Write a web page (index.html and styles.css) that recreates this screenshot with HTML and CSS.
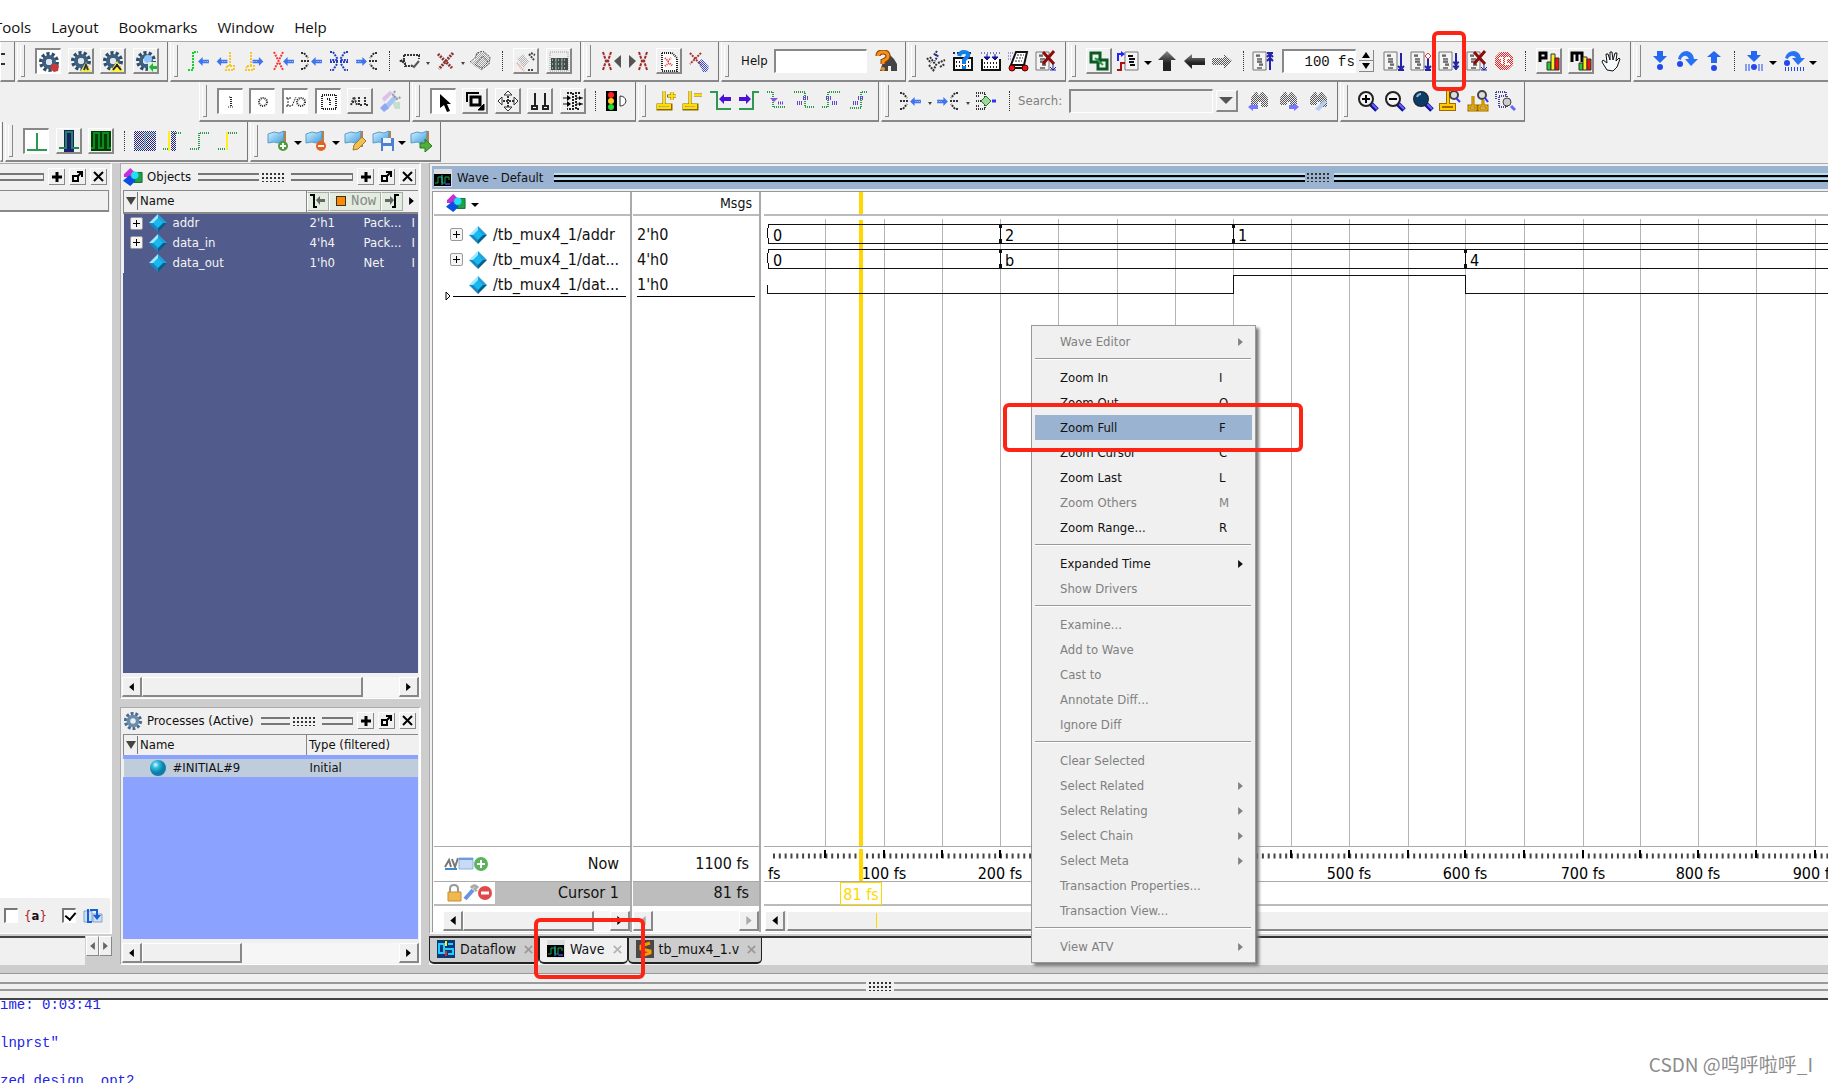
FILE: index.html
```html
<!DOCTYPE html>
<html lang="en">
<head>
<meta charset="utf-8">
<title>Wave - Default</title>
<link rel="stylesheet" href="styles.css">
</head>
<body>
<svg class="defs" aria-hidden="true">
  <defs>
    <pattern id="p-blue" width="2" height="2" patternUnits="userSpaceOnUse"><path fill="#3a46c8" d="M0 0h1v1H0zM1 1h1v1H1z"/></pattern>
    <pattern id="p-navy" width="2" height="2" patternUnits="userSpaceOnUse"><path fill="#23237c" d="M0 0h1v1H0zM1 1h1v1H1z"/></pattern>
    <pattern id="p-gray" width="2" height="2" patternUnits="userSpaceOnUse"><path fill="#555" d="M0 0h1v1H0zM1 1h1v1H1z"/></pattern>
    <pattern id="p-red" width="2" height="2" patternUnits="userSpaceOnUse"><path fill="#e22" d="M0 0h1v1H0zM1 1h1v1H1z"/></pattern>
    <linearGradient id="g-flag" x2="1" y2="1"><stop stop-color="#d8f2ff"/><stop offset="1" stop-color="#3c9fe0"/></linearGradient>
    <linearGradient id="g-ink" x2="0" y2="1"><stop stop-color="#888"/><stop offset=".6" stop-color="#222"/></linearGradient>
    <radialGradient id="g-ball" cx=".35" cy=".3"><stop stop-color="#e4fbff"/><stop offset=".4" stop-color="#35c0e4"/><stop offset="1" stop-color="#0c7fa4"/></radialGradient>
  </defs>
  <symbol id="gear" viewBox="0 0 22 22"><circle cx="11" cy="11" r="8" fill="none" stroke="#2f4c69" stroke-width="4" stroke-dasharray="3 2"/><circle cx="11" cy="11" r="5" fill="none" stroke="#3d5f80" stroke-width="4"/><circle cx="11" cy="11" r="3" fill="#dfe6ee"/></symbol>
  <symbol id="gear-light" viewBox="0 0 22 22"><circle cx="11" cy="11" r="8" fill="none" stroke="#4a6b8a" stroke-width="4" stroke-dasharray="3 2"/><circle cx="11" cy="11" r="5" fill="none" stroke="#6a8dad" stroke-width="4"/><circle cx="11" cy="11" r="2" fill="#e8eef4"/></symbol>
  <symbol id="gear-stop" viewBox="0 0 22 22"><use href="#gear"/><path d="M14 13h5l2 2-1 5-4 1-4-3z" fill="#c33a3a"/></symbol>
  <symbol id="gear-warn" viewBox="0 0 22 22"><use href="#gear"/><path d="M16 12l6 10H10z" fill="#f3e95a"/><path d="M14 20l2-5 2 5" fill="none" stroke="#333" stroke-width="2"/></symbol>
  <symbol id="gear-warn2" viewBox="0 0 22 22"><use href="#gear"/><path d="M15 11l7 11H8z" fill="#fff04a"/><path d="M11 20l4-5 4 5M15 14v3" fill="none" stroke="#222" stroke-width="2"/></symbol>
  <symbol id="gear-net" viewBox="0 0 22 22"><use href="#gear"/><circle cx="13" cy="9" r="4" fill="#8fc4ff"/><path d="M13 12h9v10h-9z" fill="#d8f4d8"/><path d="M14 17l4-4v3h4v3h-4v3z" fill="#29b03a"/></symbol>
  <symbol id="al" viewBox="0 0 12 10"><path d="M0 5l5-5v3h7v4H5v3z" fill="#3f74ee"/><path d="M6 5h6" stroke="#bcd4ff" stroke-dasharray="1 1"/></symbol>
  <symbol id="ar" viewBox="0 0 12 10"><path d="M12 5L7 0v3H0v4h7v3z" fill="#3f74ee"/><path d="M0 5h6" stroke="#bcd4ff" stroke-dasharray="1 1"/></symbol>
  <symbol id="edge-in" viewBox="0 0 22 22"><path d="M1 20h5V2h5" fill="none" stroke="#18d030" stroke-width="2" stroke-dasharray="2 1"/><use href="#al" x="11" y="7" width="11" height="9"/></symbol>
  <symbol id="flag-l" viewBox="0 0 22 22"><path d="M15 2v14M12 16h7v4h-8z" fill="none" stroke="#f4c82c" stroke-width="2" stroke-dasharray="2 1"/><use href="#al" x="1" y="7" width="12" height="9"/></symbol>
  <symbol id="flag-r" viewBox="0 0 22 22"><path d="M7 2v14M3 16h7v4H2z" fill="none" stroke="#f4c82c" stroke-width="2" stroke-dasharray="2 1"/><use href="#ar" x="8" y="7" width="12" height="9"/></symbol>
  <symbol id="x-in" viewBox="0 0 22 22"><path d="M2 2l9 18M11 2L2 20" fill="none" stroke="#f33" stroke-width="2" stroke-dasharray="2 1"/><use href="#al" x="11" y="7" width="11" height="9"/></symbol>
  <symbol id="c-in" viewBox="0 0 22 22"><path d="M1 3h3l4 5M1 11h8M1 19h3l4-5" fill="none" stroke="#333" stroke-width="2" stroke-dasharray="2 1"/><use href="#al" x="11" y="7" width="11" height="9"/></symbol>
  <symbol id="c-both" viewBox="0 0 22 22"><path d="M2 2h3l4 6v2H2M2 12h7v2l-4 6H2M20 2h-3l-4 6v2h7M20 12h-7v2l4 6h3" fill="none" stroke="#2440c0" stroke-width="2" stroke-dasharray="2 1"/></symbol>
  <symbol id="c-out" viewBox="0 0 22 22"><path d="M21 3h-3l-4 5M21 11h-8M21 19h-3l-4-5" fill="none" stroke="#333" stroke-width="2" stroke-dasharray="2 1"/><use href="#ar" x="0" y="7" width="11" height="9"/></symbol>
  <symbol id="sel" viewBox="0 0 22 22"><path d="M5 5h16M5 5v4l-3 2 4 2v3h8M1 11h5M20 5v4" fill="none" stroke="#333" stroke-width="2" stroke-dasharray="2 1"/><path d="M12 15l3 2 5-6" fill="none" stroke="#555" stroke-width="2"/></symbol>
  <symbol id="x-dark" viewBox="0 0 22 22"><path d="M4 4l14 14M19 3L5 19" stroke="#8c3434" stroke-width="3" stroke-dasharray="2 1"/></symbol>
  <symbol id="diam" viewBox="0 0 22 22"><path d="M7 3l8-1 7 8-4 6-7 4-4-3-6-4 5-3z" fill="url(#p-gray)" opacity=".5"/><path d="M1 12l5-4 2-5 6-2 7 6-1 7-8 6M6 15l8-9 5 6-6 6z" fill="none" stroke="#555" stroke-dasharray="2 1"/></symbol>
  <symbol id="doc-dim" viewBox="0 0 22 22"><path d="M2 9l6-5 6 7-5 7z" fill="url(#p-gray)" opacity=".4"/><path d="M2 13l7 8" stroke="#e99" stroke-width="2" stroke-dasharray="1 1"/><path d="M14 4l5 6M13 20h6M16 3l4 2" stroke="#444" stroke-width="2" stroke-dasharray="2 1"/></symbol>
  <symbol id="table" viewBox="0 0 22 22"><path d="M2 2h18v19H2z" fill="#eee" stroke="#999" stroke-dasharray="1 1"/><path d="M3 8h17v12H3z" fill="#4a4a4a"/><path d="M4 10h15M4 14h15M4 18h15" stroke="#59c0a0" stroke-width="2" stroke-dasharray="1 2"/><path d="M8 8v12M14 8v12" stroke="#999"/></symbol>
  <symbol id="xl" viewBox="0 0 22 22"><path d="M3 2l3 9-3 9M11 2l-3 9 3 9M6 11h3" fill="none" stroke="#a02c2c" stroke-width="2" stroke-dasharray="3 1"/><path d="M21 5v13l-7-7z" fill="#555"/></symbol>
  <symbol id="xr" viewBox="0 0 22 22"><path d="M11 2l3 9-3 9M19 2l-3 9 3 9M13 11h3" fill="none" stroke="#a02c2c" stroke-width="2" stroke-dasharray="3 1"/><path d="M1 5v13l7-7z" fill="#555"/></symbol>
  <symbol id="page-x" viewBox="0 0 22 22"><path d="M4 3h10l5 5v13H4z" fill="#fff" stroke="#222" stroke-width="2" stroke-dasharray="1 1"/><path d="M7 8l3 3 3-3M7 16l4-3 4 3" fill="none" stroke="#e33" stroke-width="2" stroke-dasharray="1 1"/></symbol>
  <symbol id="x-brush" viewBox="0 0 22 22"><path d="M2 3l11 12M13 3L2 14" stroke="#a33" stroke-width="2" stroke-dasharray="2 1"/><path d="M10 12l4-3 7 8-2 5h-4z" fill="url(#p-blue)"/></symbol>
  <symbol id="find-help" viewBox="0 0 22 22"><path d="M8 12l5-7h2l4 4 3 5v7h-6v-5h-3v5H5z" fill="#444"/><path d="M3 6q0-4 5-4t5 4q0 3-5 5v3" fill="none" stroke="#8a4400" stroke-width="5"/><path d="M3 6q0-4 5-4t5 4q0 3-5 5v3" fill="none" stroke="#f78e1e" stroke-width="3"/><circle cx="8" cy="19" r="2" fill="#f78e1e"/></symbol>
  <symbol id="compile" viewBox="0 0 22 22"><path d="M2 8l4 5M5 7l5 7M4 15l5 6M13 13l7-3M15 17l5-3M8 21l4-8" stroke="#333" stroke-width="2" stroke-dasharray="2 1"/><path d="M12 1L9 5h4l-3 6" fill="none" stroke="#337" stroke-width="2" stroke-dasharray="2 1"/></symbol>
  <symbol id="tray-q" viewBox="0 0 22 22"><path d="M2 8h18v12H2z" fill="#fff" stroke="#111" stroke-width="2"/><path d="M4 12h15M4 16h15" stroke="#222" stroke-width="2" stroke-dasharray="1 2"/><path d="M1 3h20" stroke="#23237c" stroke-width="2" stroke-dasharray="2 2"/><path d="M7 6q1-4 5-4 5 0 4 4l-4 4v4" fill="none" stroke="#1280e8" stroke-width="4"/><path d="M10 16h4v3h-4z" fill="#1280e8"/></symbol>
  <symbol id="tray" viewBox="0 0 22 22"><path d="M2 9v11h18V9" fill="#fff" stroke="#111" stroke-width="2"/><path d="M4 13h15M4 17h15" stroke="#222" stroke-width="2" stroke-dasharray="1 2"/><path d="M1 3h20" stroke="#77c" stroke-width="2" stroke-dasharray="1 2"/><path d="M7 4v4M15 4v4M4 7l3 3 3-3zM12 7l3 3 3-3z" stroke="#119" fill="#119"/></symbol>
  <symbol id="cart" viewBox="0 0 22 22"><path d="M9 2h11l-3 13H4z" fill="#fff" stroke="#111" stroke-width="2"/><path d="M10 5h7M9 8h7M8 11h7" stroke="#333" stroke-dasharray="2 1"/><path d="M1 3h5M1 6h4M1 9h3" stroke="#55b" stroke-dasharray="1 1"/><path d="M3 18h15" stroke="#111" stroke-width="2"/><circle cx="5" cy="18" r="3" fill="#e11" stroke="#400"/><circle cx="18" cy="18" r="3" fill="#e11" stroke="#400"/></symbol>
  <symbol id="page" viewBox="0 0 22 22"><path d="M1 2h13v18H1z" fill="#f4f4f4" stroke="#777"/><path d="M4 6h4M5 9h5M5 12h5M7 15h4M5 18h5" stroke="#111"/><path d="M4 5h4M5 11h5M7 14h4" stroke="#555"/></symbol>
  <symbol id="page-kill" viewBox="0 0 22 22"><use href="#page"/><path d="M8 2l11 12M19 1L8 14" stroke="#8c0b0b" stroke-width="3"/><path d="M18 14v6M15 20h6M15 17l3 3 3-3" stroke="#229" fill="none"/></symbol>
  <symbol id="chain" viewBox="0 0 22 22"><path d="M3 3h9v9H3zM10 10h9v9h-9z" fill="none" stroke="#0b5a22" stroke-width="3"/><path d="M7 8l8 7" stroke="#2f9a4c" stroke-width="2"/></symbol>
  <symbol id="restart" viewBox="0 0 22 22"><path d="M8 2h13v18H8z" fill="#f4f4f4" stroke="#777"/><path d="M11 6h5M12 9h6M12 12h5M13 15h5" stroke="#111" stroke-width="2"/><path d="M1 11V4h4" fill="none" stroke="#22f" stroke-width="2"/><path d="M4 1l4 3-4 3z" fill="#22f"/><path d="M0 20h4v-7h4" fill="none" stroke="#a11" stroke-width="2"/></symbol>
  <symbol id="a-up" viewBox="0 0 22 22"><path d="M11 1l9 9h-5v11H7V10H2z" fill="url(#g-ink)"/></symbol>
  <symbol id="a-left" viewBox="0 0 22 22"><path d="M1 11l8-7v4h13v7H9v4z" fill="url(#g-ink)"/></symbol>
  <symbol id="a-right" viewBox="0 0 22 22"><path d="M21 11l-8-7v4H1v7h12v4z" fill="url(#p-gray)"/></symbol>
  <symbol id="run-len" viewBox="0 0 22 22"><use href="#page"/><path d="M18 3v17M15 3h6M15 7l3-3 3 3M15 11l3-3 3 3" stroke="#22a" stroke-width="2" fill="none"/></symbol>
  <symbol id="run" viewBox="0 0 22 22"><use href="#page"/><path d="M18 3v16M15 20h6M15 16l3 3 3-3" stroke="#22a" stroke-width="2" fill="none"/></symbol>
  <symbol id="run-cont" viewBox="0 0 22 22"><use href="#page"/><path d="M18 9v10M15 20h6M15 16l3 3 3-3" stroke="#22a" stroke-width="2" fill="none"/><path d="M18 3l3 3-3 3-3-3z" fill="#fff" stroke="#e33"/></symbol>
  <symbol id="run-all" viewBox="0 0 22 22"><use href="#page"/><path d="M18 3v15" stroke="#22a" stroke-width="2"/><path d="M15 12h6l-3 4zM15 16h6l-3 4z" stroke="#22a" fill="#22a"/></symbol>
  <symbol id="stop" viewBox="0 0 22 22"><path d="M7 2h8l5 5v8l-5 5H7l-5-5V7z" fill="url(#p-red)"/><path d="M6 8h3v6M17 8h-4v6h4" stroke="#fff" stroke-width="2" fill="none"/></symbol>
  <symbol id="prof-p" viewBox="0 0 22 22"><path d="M2 12V3h6v5H2" fill="none" stroke="#000" stroke-width="3"/><path d="M9 12h4v8H9z" fill="#2c2" stroke="#333"/><path d="M13 4h4v16h-4z" fill="#fe2" stroke="#333"/><path d="M17 8h4v12h-4z" fill="#e11" stroke="#333"/></symbol>
  <symbol id="prof-m" viewBox="0 0 22 22"><path d="M2 12V3h10v9M7 3v8" fill="none" stroke="#000" stroke-width="3"/><path d="M9 13h4v7H9z" fill="#2c2" stroke="#333"/><path d="M13 7h4v13h-4z" fill="#fe2" stroke="#333"/><path d="M17 9h4v11h-4z" fill="#e11" stroke="#333"/></symbol>
  <symbol id="hand" viewBox="0 0 22 22"><path d="M7 20l-5-8 1-2 4 3-1-9h2l2 6V2h2l1 8 2-7h2l-1 8 3-3 1 1-3 8-4 4z" fill="#f6faff" stroke="#111"/></symbol>
  <symbol id="st-in" viewBox="0 0 22 22"><path d="M8 1h6v5h4l-7 7-7-7h4z" fill="#2468f0"/><circle cx="11" cy="17" r="3" fill="#2448f0"/></symbol>
  <symbol id="st-over" viewBox="0 0 22 22"><path d="M2 9q2-8 9-8 6 1 7 8h4l-7 7-6-7h4q-2-4-5-3-3 1-3 4z" fill="#2a72f4"/><circle cx="4" cy="14" r="3" fill="#2448f0"/></symbol>
  <symbol id="st-out" viewBox="0 0 22 22"><path d="M8 13V7H4l7-6 7 6h-4v6z" fill="#2468f0"/><circle cx="11" cy="18" r="3" fill="#2448f0"/></symbol>
  <symbol id="st-in2" viewBox="0 0 22 22"><path d="M8 1h6v4h4l-7 7-7-7h4z" fill="#2468f0"/><circle cx="11" cy="17" r="3" fill="#2448f0"/><path d="M3 14v7M6 14v7M16 14v7M19 14v7" stroke="#2448f0"/></symbol>
  <symbol id="st-over2" viewBox="0 0 22 22"><path d="M2 8q2-7 9-7 6 1 7 7h4l-7 7-6-7h4q-2-3-5-2-3 1-3 3z" fill="#2a72f4"/><circle cx="4" cy="13" r="3" fill="#2448f0"/><path d="M2 19h19" stroke="#2448f0" stroke-width="4" stroke-dasharray="1 2"/></symbol>
  <symbol id="l-i" viewBox="0 0 22 22"><path d="M9 6h2M8 16h6" stroke="#222" stroke-dasharray="1 1"/><path d="M11 6v10" stroke="#222" stroke-width="2" stroke-dasharray="1 1"/></symbol>
  <symbol id="l-o" viewBox="0 0 22 22"><circle cx="11" cy="11" r="4" fill="none" stroke="#222" stroke-width="2" stroke-dasharray="1 1"/></symbol>
  <symbol id="l-io" viewBox="0 0 22 22"><path d="M1 7h5M3 7v8M1 15h5M7 15l4-9" stroke="#222" stroke-dasharray="2 1" fill="none"/><circle cx="16" cy="11" r="4" fill="none" stroke="#222" stroke-width="2" stroke-dasharray="1 1"/></symbol>
  <symbol id="l-box" viewBox="0 0 22 22"><path d="M4 4h14v14H4zM9 8h3v7" fill="none" stroke="#222" stroke-width="2" stroke-dasharray="1 1"/></symbol>
  <symbol id="l-all" viewBox="0 0 22 22"><path d="M2 15l3-8 3 8M3 12h4M10 7v8h4M16 7v8h4" fill="none" stroke="#333" stroke-width="2" stroke-dasharray="2 1"/></symbol>
  <symbol id="paint" viewBox="0 0 22 22"><path d="M3 8l8-7 3 2-9 9z" fill="#dcc0e8"/><path d="M13 12h8v7h-5z" fill="#c4e0cc"/><path d="M5 16L15 5l4 3L8 20z" fill="#a9c4f4"/><path d="M16 1l-2 4 4 4 4-2" fill="none" stroke="#999" stroke-width="2" stroke-dasharray="2 1"/><path d="M1 18l5-5 4 5-5 4z" fill="#8fa8f4"/></symbol>
  <symbol id="cursor" viewBox="0 0 22 22"><path d="M7 3v14l4-3 3 7 3-1-3-7h4z" fill="#000"/></symbol>
  <symbol id="zoom-box" viewBox="0 0 22 22"><path d="M3 12V3h12" fill="none" stroke="#000" stroke-width="2"/><path d="M7 7h9v8H7z" fill="none" stroke="#000" stroke-width="3"/><path d="M15 14l4 4M20 14v6h-6z" fill="#000" stroke="#000"/></symbol>
  <symbol id="pan" viewBox="0 0 22 22"><path d="M11 3v16M3 11h16" stroke="#333" stroke-width="2" stroke-dasharray="2 1"/><path d="M7 5l4-4 4 4zM7 17l4 4 4-4zM5 7l-4 4 4 4zM17 7l4 4-4 4z" fill="#fff" stroke="#333"/></symbol>
  <symbol id="two" viewBox="0 0 22 22"><path d="M6 3v13M16 3v13" stroke="#222" stroke-width="2"/><path d="M3 16h5v3H3zM14 16h5v3h-5z" fill="#fff" stroke="#222" stroke-width="2"/></symbol>
  <symbol id="edit-m" viewBox="0 0 22 22"><path d="M5 3h6v16H5M18 3h-4v16h4" fill="none" stroke="#222" stroke-width="2" stroke-dasharray="2 1"/><path d="M1 8h5M1 14h5M14 8h7M14 14h7" stroke="#111" fill="none"/><path d="M5 5l4 3-4 3zM5 11l4 3-4 3zM17 6l3 2-3 2zM17 12l3 2-3 2z"/></symbol>
  <symbol id="traffic" viewBox="0 0 22 22"><path d="M1 1h11v20H1z" fill="#000"/><circle cx="6" cy="5" r="3" fill="#f22"/><circle cx="6" cy="11" r="3" fill="#fc2"/><circle cx="6" cy="17" r="3" fill="#2d3"/><path d="M15 6q5 0 6 5-1 5-6 5z" fill="#fff" stroke="#333"/></symbol>
  <symbol id="cur-add" viewBox="0 0 22 22"><path d="M9 1v14M3 15h13v4H3zM12 6h9M17 2v8" fill="none" stroke="#8a6a00" stroke-width="3"/><path d="M9 1v14M3 15h12v3H3zM13 6h8M17 2v8" fill="none" stroke="#fd0" stroke-width="2"/></symbol>
  <symbol id="cur-del" viewBox="0 0 22 22"><path d="M8 1v14M2 15h13v4H2zM12 5h8" fill="none" stroke="#8a6a00" stroke-width="3"/><path d="M8 1v14M2 15h12v3H2zM12 5h8" fill="none" stroke="#fd0" stroke-width="2"/></symbol>
  <symbol id="tr-prev" viewBox="0 0 22 22"><path d="M0 2h7v17h14" fill="none" stroke="#2e9a50" stroke-width="2"/><path d="M9 9l5-5v3h7v4h-7v3z" fill="#4a0fd8"/></symbol>
  <symbol id="tr-next" viewBox="0 0 22 22"><path d="M1 19h14V2h6" fill="none" stroke="#2e9a50" stroke-width="2"/><path d="M13 9L8 4v3H1v4h7v3z" fill="#4a0fd8"/></symbol>
  <symbol id="e1" viewBox="0 0 22 22"><path d="M2 2h6v15h13" fill="none" stroke="#2e9a50" stroke-width="2" stroke-dasharray="1 1"/><path d="M5 8h8l-4 4z" fill="#85d"/><path d="M13 13h5" stroke="#64c" stroke-width="3" stroke-dasharray="1 1"/></symbol>
  <symbol id="e2" viewBox="0 0 22 22"><path d="M1 2h11v15h9" fill="none" stroke="#2e9a50" stroke-width="2" stroke-dasharray="1 1"/><path d="M10 8h6M4 13h6" stroke="#64c" stroke-width="4" stroke-dasharray="1 1"/></symbol>
  <symbol id="e3" viewBox="0 0 22 22"><path d="M2 17h6V2h13" fill="none" stroke="#2e9a50" stroke-width="2" stroke-dasharray="1 1"/><path d="M6 8h6M12 13h6" stroke="#64c" stroke-width="4" stroke-dasharray="1 1"/></symbol>
  <symbol id="e4" viewBox="0 0 22 22"><path d="M2 18h11V2h7" fill="none" stroke="#2e9a50" stroke-width="2" stroke-dasharray="1 1"/><path d="M10 8h6M5 13h6" stroke="#64c" stroke-width="4" stroke-dasharray="1 1"/></symbol>
  <symbol id="net" viewBox="0 0 22 22"><path d="M1 3h9v4M1 11h9M1 19h9v-4M1 6h4M1 16h4" fill="none" stroke="#333" stroke-width="2" stroke-dasharray="1 1"/><path d="M11 6l5 5-5 5-5-5z" fill="#9fd89f" stroke="#272"/><path d="M17 11h4" stroke="#33f" stroke-width="3"/></symbol>
  <symbol id="bino" viewBox="0 0 22 22"><path d="M3 15V8l4-6h2l2 4 2-4h2l5 6v9h-7v-5h-3v3z" fill="url(#p-gray)"/></symbol>
  <symbol id="bino-l" viewBox="0 0 22 22"><use href="#bino"/><path d="M0 17l5-4v2h5v4H5v2z" fill="#77f"/></symbol>
  <symbol id="bino-r" viewBox="0 0 22 22"><use href="#bino"/><path d="M22 17l-5-4v2h-5v4h5v2z" fill="#77f"/></symbol>
  <symbol id="bino-p" viewBox="0 0 22 22"><use href="#bino"/><path d="M8 19l9-9 3 2-8 9z" fill="#b4cdf0"/></symbol>
  <symbol id="mag" viewBox="0 0 22 22"><path d="M14 14l6 6" stroke="#119" stroke-width="5"/><path d="M15 14l5 5" stroke="#66f" stroke-width="2"/><circle cx="9" cy="9" r="7" fill="#f4f4f4" stroke="#222" stroke-width="2"/></symbol>
  <symbol id="z-in" viewBox="0 0 22 22"><use href="#mag"/><path d="M5 9h8M9 5v8" stroke="#000" stroke-width="2"/></symbol>
  <symbol id="z-out" viewBox="0 0 22 22"><use href="#mag"/><path d="M5 9h8" stroke="#000" stroke-width="2"/></symbol>
  <symbol id="z-full" viewBox="0 0 22 22"><use href="#mag"/><circle cx="9" cy="9" r="7" fill="#0c3c66"/><path d="M5 7q1-3 4-3" stroke="#8bd" stroke-width="2" fill="none"/></symbol>
  <symbol id="z-cur" viewBox="0 0 22 22"><path d="M9 1v14M2 15h13v4H2z" fill="none" stroke="#a06a00" stroke-width="4"/><path d="M9 1v14M2 15h13v4H2z" fill="none" stroke="#fc0" stroke-width="2"/><circle cx="15" cy="5" r="4" fill="#ddd" stroke="#444" stroke-width="2"/><path d="M17 8l4 4" stroke="#33f" stroke-width="2"/></symbol>
  <symbol id="z-two" viewBox="0 0 22 22"><path d="M6 6v10M2 16h7v4H2zM16 10v6M12 16h8v4h-8z" fill="none" stroke="#a06a00" stroke-width="3"/><path d="M6 6v10M2 16h7v4H2zM16 10v6M12 16h8v4h-8z" fill="none" stroke="#fc0"/><circle cx="15" cy="5" r="4" fill="#ddd" stroke="#444" stroke-width="2"/><path d="M18 8l3 4" stroke="#33f" stroke-width="2"/></symbol>
  <symbol id="z-area" viewBox="0 0 22 22"><path d="M2 2h10v3M2 2v8M5 6h8v11H5z" fill="none" stroke="#449" stroke-width="2" stroke-dasharray="1 1"/><circle cx="13" cy="12" r="4" fill="#ccc" stroke="#444"/><path d="M17 16l4 4" stroke="#66f" stroke-width="3"/></symbol>
  <symbol id="w-line" viewBox="0 0 22 22"><path d="M1 19h20M11 2v17" stroke="#2e9a50" stroke-width="2"/></symbol>
  <symbol id="w-navy" viewBox="0 0 22 22"><path d="M6 0h10v22H6z" fill="#1c1c72"/><path d="M1 18h7V2h6v16h7" fill="none" stroke="#1f8a50" stroke-width="2"/></symbol>
  <symbol id="w-green" viewBox="0 0 22 22"><path d="M1 1h20v20H1z" fill="#003d00"/><path d="M1 18h3V3h5v15h4V3h5v15h3" fill="none" stroke="#0c8c20" stroke-width="2"/></symbol>
  <symbol id="d-full" viewBox="0 0 22 22"><path d="M0 1h22v20H0z" fill="url(#p-navy)"/><path d="M1 18h10V4h10" stroke="#6aa" fill="none"/></symbol>
  <symbol id="d-part" viewBox="0 0 22 22"><path d="M9 1h5v20H9z" fill="url(#p-navy)"/><path d="M7 1v20" stroke="#fe2" stroke-width="2"/><path d="M1 19h6M12 3h8" stroke="#2e9a50" stroke-width="2" stroke-dasharray="1 1"/></symbol>
  <symbol id="d-rise" viewBox="0 0 22 22"><path d="M1 19h9V3h10" fill="none" stroke="#2e9a50" stroke-width="2" stroke-dasharray="1 1"/></symbol>
  <symbol id="d-risey" viewBox="0 0 22 22"><path d="M1 19h9V3h10" fill="none" stroke="#2e9a50" stroke-width="2" stroke-dasharray="1 1"/><path d="M10 2v18" stroke="#fe2" stroke-width="2"/></symbol>
  <symbol id="bm" viewBox="0 0 22 22"><path d="M15 1h4v16h-4z" fill="#b5804a"/><path d="M1 4l6-2 5 1 5-2-1 10-5 2-4-1-6 1z" fill="url(#g-flag)" stroke="#5b9cc8"/></symbol>
  <symbol id="bm-add" viewBox="0 0 22 22"><use href="#bm"/><circle cx="16" cy="16" r="5" fill="#4f9a40"/><path d="M13 16h6M16 13v6" stroke="#fff" stroke-width="2"/></symbol>
  <symbol id="bm-del" viewBox="0 0 22 22"><use href="#bm"/><circle cx="16" cy="16" r="5" fill="#e8601c"/><path d="M13 16h6" stroke="#fff" stroke-width="2"/></symbol>
  <symbol id="bm-edit" viewBox="0 0 22 22"><use href="#bm"/><path d="M9 20l1-5 8-8 4 4-8 8z" fill="#f0c050" stroke="#a8772a"/></symbol>
  <symbol id="bm-save" viewBox="0 0 22 22"><use href="#bm"/><path d="M9 8h13v13H9z" fill="#4f7fd0"/><path d="M11 8h8v5h-8zM11 16h9v5h-9z" fill="#eef4ff"/></symbol>
  <symbol id="bm-go" viewBox="0 0 22 22"><use href="#bm"/><path d="M10 13h5V9l7 7-7 6v-4h-5z" fill="#4fae3c" stroke="#2d7a22"/></symbol>
  <symbol id="shapes" viewBox="0 0 22 20"><path d="M8 0l7 7-4 3H1V7z" fill="#c42fd8"/><path d="M12 5h9v11h-9z" fill="#1fa04a" stroke="#0b6b2b"/><path d="M7 8l7 6-6 6-8-6z" fill="#0b4fe0"/><circle cx="13" cy="8" r="4" fill="#1fe0f4"/></symbol>
  <symbol id="gem" viewBox="0 0 18 18"><path d="M9 0L0 9h9z" fill="#9fe8ff"/><path d="M9 0l9 9H9z" fill="#22a0d8"/><path d="M0 9l9 9V9z" fill="#1788c4"/><path d="M18 9l-9 9V9z" fill="#06608c"/><path d="M9 4l5 5-5 5-5-5z" fill="#18b8f0"/></symbol>
  <symbol id="wave-ic" viewBox="0 0 18 18"><path d="M0 0h18v18H0z" fill="#ddd"/><path d="M0 5h17v12H0z" fill="#000"/><path d="M1 14h3V8h4v6h3V8h4v3" fill="none" stroke="#14a84a"/><path d="M8 6v10" stroke="#2bd"/><path d="M11 15h5" stroke="#33a" stroke-width="2"/></symbol>
  <symbol id="flow-ic" viewBox="0 0 18 18"><path d="M0 0h18v18H0z" fill="#0a3a78"/><path d="M2 4h5v9H2zM11 4h5M11 9h5v5h-5M7 9h4" fill="none" stroke="#2cf" stroke-width="2"/><path d="M9 1v5" stroke="#fe2" stroke-width="2"/><path d="M9 11v5" stroke="#e22" stroke-width="2"/></symbol>
  <symbol id="sub-ic" viewBox="0 0 18 18"><path d="M0 0h18v18H0z" fill="#484848"/><path d="M14 3L5 6v3l9 2v2l-9 3" fill="none" stroke="#f90" stroke-width="3"/></symbol>
  <symbol id="tri-r" viewBox="0 0 6 10"><path d="M0 0l6 5-6 5z" fill="currentColor"/></symbol>
  <symbol id="tri-l" viewBox="0 0 6 10"><path d="M6 0L0 5l6 5z" fill="currentColor"/></symbol>
  <symbol id="plus" viewBox="0 0 11 11"><path d="M6 1v10M1 6h10" stroke="#000" stroke-width="3"/></symbol>
  <symbol id="undock" viewBox="0 0 11 11"><path d="M1 5h5v5H1z" fill="none" stroke="#000" stroke-width="2"/><path d="M5 6l5-5M5 1h5v5" fill="none" stroke="#000" stroke-width="2"/></symbol>
  <symbol id="close" viewBox="0 0 11 11"><path d="M1 1l9 9M10 1l-9 9" stroke="#000" stroke-width="2"/></symbol>
</svg>

<nav class="menubar">
  <button class="cut">Tools</button><button>Layout</button><button>Bookmarks</button><button>Window</button><button>Help</button>
</nav>

<section class="toolbars">
  <div class="row">
    <div class="bar stub-a"><i class="hook"></i></div>
    <div class="bar w151"><button class="b in"><svg><use href="#gear-stop"/></svg></button><button class="b up"><svg><use href="#gear-warn"/></svg></button><button class="b up"><svg><use href="#gear-warn2"/></svg></button><button class="b up"><svg><use href="#gear-net"/></svg></button></div>
    <div class="bar w411"><button class="b"><svg><use href="#edge-in"/></svg></button><button class="b"><svg><use href="#flag-l"/></svg></button><button class="b"><svg><use href="#flag-r"/></svg></button><button class="b"><svg><use href="#x-in"/></svg></button><button class="b"><svg><use href="#c-in"/></svg></button><button class="b"><svg><use href="#c-both"/></svg></button><button class="b"><svg><use href="#c-out"/></svg></button><i class="sep"></i><button class="b"><svg><use href="#sel"/></svg></button><i class="drop sm"></i><button class="b"><svg><use href="#x-dark"/></svg></button><i class="drop sm"></i><button class="b"><svg><use href="#diam"/></svg></button><i class="sep"></i><button class="b up"><svg><use href="#doc-dim"/></svg></button><button class="b up"><svg><use href="#table"/></svg></button></div>
    <div class="bar w136"><button class="b"><svg><use href="#xl"/></svg></button><button class="b"><svg><use href="#xr"/></svg></button><button class="b up"><svg><use href="#page-x"/></svg></button><button class="b"><svg><use href="#x-brush"/></svg></button></div>
    <div class="bar w185"><label for="help">Help</label><input id="help" class="field help" type="text"><button class="b"><svg><use href="#find-help"/></svg></button></div>
    <div class="bar w158"><button class="b"><svg><use href="#compile"/></svg></button><button class="b"><svg><use href="#tray-q"/></svg></button><button class="b"><svg><use href="#tray"/></svg></button><button class="b"><svg><use href="#cart"/></svg></button><button class="b"><svg><use href="#page-kill"/></svg></button></div>
    <div class="bar w563"><button class="b up"><svg><use href="#chain"/></svg></button><button class="b"><svg><use href="#restart"/></svg></button><i class="drop"></i><button class="b"><svg><use href="#a-up"/></svg></button><button class="b"><svg><use href="#a-left"/></svg></button><button class="b"><svg><use href="#a-right"/></svg></button><i class="sep"></i><button class="b"><svg><use href="#run-len"/></svg></button><span class="spin"><input class="field len" type="text" value="100 fs" aria-label="Run length"><span class="steps"><button aria-label="More"><i class="t-up"></i></button><button aria-label="Less"><i class="t-dn"></i></button></span></span><button class="b"><svg><use href="#run"/></svg></button><button class="b"><svg><use href="#run-cont"/></svg></button><button class="b marked"><svg><use href="#run-all"/></svg><span class="mark mark-run"></span></button><button class="b"><svg><use href="#page-kill"/></svg></button><button class="b"><svg><use href="#stop"/></svg></button><i class="sep"></i><button class="b up"><svg><use href="#prof-p"/></svg></button><button class="b up"><svg><use href="#prof-m"/></svg></button><button class="b"><svg><use href="#hand"/></svg></button></div>
    <div class="bar rest"><button class="b"><svg><use href="#st-in"/></svg></button><button class="b"><svg><use href="#st-over"/></svg></button><button class="b"><svg><use href="#st-out"/></svg></button><i class="sep"></i><button class="b"><svg><use href="#st-in2"/></svg></button><i class="drop"></i><button class="b"><svg><use href="#st-over2"/></svg></button><i class="drop"></i></div>
  </div>
  <div class="row second">
    <div class="bar w211"><button class="b in"><svg><use href="#l-i"/></svg></button><button class="b in"><svg><use href="#l-o"/></svg></button><button class="b in"><svg><use href="#l-io"/></svg></button><button class="b in"><svg><use href="#l-box"/></svg></button><button class="b up"><svg><use href="#l-all"/></svg></button><button class="b"><svg><use href="#paint"/></svg></button></div>
    <div class="bar w224"><button class="b in"><svg><use href="#cursor"/></svg></button><button class="b up"><svg><use href="#zoom-box"/></svg></button><button class="b up"><svg><use href="#pan"/></svg></button><button class="b up"><svg><use href="#two"/></svg></button><button class="b up"><svg><use href="#edit-m"/></svg></button><i class="sep"></i><button class="b"><svg><use href="#traffic"/></svg></button></div>
    <div class="bar w241"><button class="b"><svg><use href="#cur-add"/></svg></button><button class="b"><svg><use href="#cur-del"/></svg></button><button class="b"><svg><use href="#tr-prev"/></svg></button><button class="b"><svg><use href="#tr-next"/></svg></button><button class="b"><svg><use href="#e1"/></svg></button><button class="b"><svg><use href="#e2"/></svg></button><button class="b"><svg><use href="#e3"/></svg></button><button class="b"><svg><use href="#e4"/></svg></button></div>
    <div class="bar w457"><button class="b"><svg><use href="#c-in"/></svg></button><i class="drop sm"></i><button class="b"><svg><use href="#c-out"/></svg></button><i class="drop sm"></i><button class="b"><svg><use href="#net"/></svg></button><i class="sep"></i><label class="dim" for="search">Search:</label><span class="combo"><input id="search" class="field search" type="text" disabled><button class="pick" aria-label="History"><i class="t-dn big"></i></button></span><button class="b"><svg><use href="#bino-l"/></svg></button><button class="b"><svg><use href="#bino-r"/></svg></button><button class="b"><svg><use href="#bino-p"/></svg></button></div>
    <div class="bar w185"><button class="b"><svg><use href="#z-in"/></svg></button><button class="b"><svg><use href="#z-out"/></svg></button><button class="b"><svg><use href="#z-full"/></svg></button><button class="b"><svg><use href="#z-cur"/></svg></button><button class="b"><svg><use href="#z-two"/></svg></button><button class="b"><svg><use href="#z-area"/></svg></button></div>
  </div>
  <div class="row">
    <div class="bar stub-b"></div>
    <div class="bar w243"><button class="b in"><svg><use href="#w-line"/></svg></button><button class="b up"><svg><use href="#w-navy"/></svg></button><button class="b up"><svg><use href="#w-green"/></svg></button><i class="sep"></i><button class="b"><svg><use href="#d-full"/></svg></button><button class="b"><svg><use href="#d-part"/></svg></button><button class="b"><svg><use href="#d-rise"/></svg></button><button class="b"><svg><use href="#d-risey"/></svg></button></div>
    <div class="bar w191"><button class="b"><svg><use href="#bm-add"/></svg></button><i class="drop"></i><button class="b"><svg><use href="#bm-del"/></svg></button><i class="drop"></i><button class="b"><svg><use href="#bm-edit"/></svg></button><button class="b"><svg><use href="#bm-save"/></svg></button><i class="drop"></i><button class="b"><svg><use href="#bm-go"/></svg></button></div>
  </div>
</section>

<main class="work">
  <div class="col">
    <section class="panel side">
      <header class="title"><i class="rails end"></i><button class="tb"><svg><use href="#plus"/></svg></button><button class="tb"><svg><use href="#undock"/></svg></button><button class="tb"><svg><use href="#close"/></svg></button></header>
      <div class="blank-head"></div>
      <div class="paper"></div>
      <footer class="opts">
        <input type="checkbox" id="opt-a"><label for="opt-a"><span class="brace">{</span>a<span class="brace">}</span></label>
        <input type="checkbox" id="opt-b" checked><label for="opt-b" aria-label="Follow"><svg width="20" height="16" viewBox="0 0 20 16"><path d="M1 3h8v11H1zM10 6h9v8h-9z" fill="#cfe0f4" stroke="#7da3d0"/><path d="M5 1v13h4M7 2h7v5" fill="none" stroke="#1560d8" stroke-width="2"/><path d="M10 7h8l-4 5z" fill="#1560d8"/></svg></label>
      </footer>
    </section>
    <div class="side-tabs"><button aria-label="Left"><svg class="tri"><use href="#tri-l"/></svg></button><button aria-label="Right"><svg class="tri"><use href="#tri-r"/></svg></button></div>
  </div>

  <div class="col mid">
    <section class="panel objects">
      <header class="title"><svg class="ti"><use href="#shapes"/></svg><h2>Objects</h2><i class="rails"></i><i class="dots"></i><i class="rails end"></i><button class="tb"><svg><use href="#plus"/></svg></button><button class="tb"><svg><use href="#undock"/></svg></button><button class="tb"><svg><use href="#close"/></svg></button></header>
      <table class="data">
        <thead><tr><th class="c-name"><span class="hd"><i class="sort"></i>Name</span></th><th colspan="3"><span class="now"><button aria-label="Previous"><svg width="16" height="14" viewBox="0 0 16 14"><path d="M0 1h4v12h3" fill="none" stroke="#000" stroke-width="2"/><path d="M6 6l4-4v3h5v3h-5v3z" fill="#666"/></svg></button><button class="at"><i class="sq"></i>Now</button><button aria-label="Next"><svg width="16" height="14" viewBox="0 0 16 14"><path d="M8 13h3V1h4" fill="none" stroke="#000" stroke-width="2"/><path d="M10 6L6 2v3H1v3h5v3z" fill="#666"/></svg></button><svg class="tri"><use href="#tri-r"/></svg></span></th></tr></thead>
        <tbody>
          <tr><td class="c-name"><span class="nm"><button class="ex" aria-label="Expand"></button><svg class="gem"><use href="#gem"/></svg>addr</span></td><td class="c-val">2'h1</td><td class="c-kind">Pack...</td><td>I</td></tr>
          <tr><td class="c-name"><span class="nm"><button class="ex" aria-label="Expand"></button><svg class="gem"><use href="#gem"/></svg>data_in</span></td><td>4'h4</td><td>Pack...</td><td>I</td></tr>
          <tr><td class="c-name"><span class="nm"><i class="no-ex"></i><svg class="gem"><use href="#gem"/></svg>data_out</span></td><td>1'h0</td><td>Net</td><td>I</td></tr>
        </tbody>
      </table>
      <div class="fill"></div>
      <div class="sb"><button aria-label="Left"><svg class="tri"><use href="#tri-l"/></svg></button><i class="track"><i class="thumb long"></i></i><button aria-label="Right"><svg class="tri"><use href="#tri-r"/></svg></button></div>
    </section>
    <section class="panel procs">
      <header class="title"><svg class="ti"><use href="#gear-light"/></svg><h2>Processes (Active)</h2><i class="rails"></i><i class="dots"></i><i class="rails end"></i><button class="tb"><svg><use href="#plus"/></svg></button><button class="tb"><svg><use href="#undock"/></svg></button><button class="tb"><svg><use href="#close"/></svg></button></header>
      <table class="data">
        <thead><tr><th class="c-name"><span class="hd"><i class="sort"></i>Name</span></th><th>Type (filtered)</th></tr></thead>
        <tbody><tr><td class="c-name"><span class="nm"><i class="no-ex"></i><svg class="gem" viewBox="0 0 18 18"><circle cx="9" cy="9" r="8" fill="url(#g-ball)"/></svg>#INITIAL#9</span></td><td>Initial</td></tr></tbody>
      </table>
      <div class="fill"></div>
      <div class="sb"><button aria-label="Left"><svg class="tri"><use href="#tri-l"/></svg></button><i class="track"><i class="thumb short"></i></i><button aria-label="Right"><svg class="tri"><use href="#tri-r"/></svg></button></div>
    </section>
  </div>

  <div class="col wavecol">
    <section class="panel wave">
      <header class="title active"><svg class="wi"><use href="#wave-ic"/></svg><h2>Wave - Default</h2><i class="rails"></i><i class="dots"></i><i class="rails far"></i></header>
      <div class="panes">
        <div class="pane names">
          <div class="head"><svg class="ti"><use href="#shapes"/></svg><i class="drop"></i></div>
          <ul class="sigs">
            <li><button class="ex" aria-label="Expand"></button><svg class="gem"><use href="#gem"/></svg>/tb_mux4_1/addr</li>
            <li><button class="ex" aria-label="Expand"></button><svg class="gem"><use href="#gem"/></svg>/tb_mux4_1/dat...</li>
            <li><i class="no-ex"></i><svg class="gem"><use href="#gem"/></svg>/tb_mux4_1/dat...</li>
            <li class="endline"><svg width="8" height="10" viewBox="0 0 8 10"><path d="M1 1l4 4-4 4z" fill="#fff" stroke="#000"/></svg><i></i></li>
          </ul>
          <div class="nowrow"><svg width="46" height="16" viewBox="0 0 46 16"><path d="M1 11l4-7 2 7M8 3l3 8 3-9" fill="none" stroke="#777" stroke-width="2"/><path d="M1 13h12" stroke="#48c" stroke-width="2"/><path d="M15 2h14v11H15z" fill="#c8daf4" stroke="#8fb0e0"/><path d="M15 3h14" stroke="#6e9be0" stroke-width="2"/><circle cx="37" cy="8" r="7" fill="#5bb45b"/><path d="M33 8h8M37 4v8" stroke="#fff" stroke-width="2"/></svg><span>Now</span></div>
          <div class="currow"><svg width="46" height="18" viewBox="0 0 46 18"><path d="M3 8V5q0-4 4-4t4 4v3" fill="none" stroke="#999" stroke-width="2"/><path d="M1 8h13v9H1z" fill="#f0b850" stroke="#c98f2c"/><path d="M18 15l8-9" stroke="#6a92e0" stroke-width="4"/><path d="M24 4q3-4 6-1l-2 2 2 2" stroke="#aaa" stroke-width="3" fill="none"/><circle cx="38" cy="9" r="7" fill="#e04a4a"/><path d="M34 9h8" stroke="#fff" stroke-width="3"/></svg><span>Cursor 1</span></div>
          <div class="sb big"><button aria-label="Left"><svg class="tri"><use href="#tri-l"/></svg></button><i class="track"><i class="thumb names-thumb"></i></i><button aria-label="Right"><svg class="tri"><use href="#tri-r"/></svg></button></div>
        </div>
        <div class="pane msgs">
          <div class="head">Msgs</div>
          <ul class="sigs"><li>2'h0</li><li>4'h0</li><li>1'h0</li><li class="endline"><i></i></li></ul>
          <div class="nowrow"><span>1100 fs</span></div>
          <div class="currow"><span>81 fs</span></div>
          <div class="sb big off"><button aria-label="Left"><svg class="tri"><use href="#tri-l"/></svg></button><i class="track"></i><button aria-label="Right"><svg class="tri"><use href="#tri-r"/></svg></button></div>
        </div>
        <div class="pane plot">
          <div class="head"><i class="cur"></i></div>
          <svg class="traces">
            <path d="M61 3V2000M120 3V2000M178 3V2000M236 3V2000M294 3V2000M353 3V2000M411 3V2000M469 3V2000M527 3V2000M585 3V2000M644 3V2000M701 3V2000M760 3V2000M819 3V2000M876 3V2000M934 3V2000M992 3V2000M1051 3V2000M1109 3V2000M1167 3V2000M1225 3V2000M1284 3V2000M1342 3V2000" class="gl"/>
            <path d="M97 4V2000" class="cursor"/>
            <g class="tr">
              <path d="M3000 8H4V12L3 14V20L4 22V27H3000M236 8V27M469 8V27"/>
              <path d="M3000 33H4V37L3 39V45L4 47V52H3000M236 33V52M701 33V52"/>
              <path d="M3 69V77H469V59H701V77H3000"/>
            </g>
            <path class="nodes" d="M236 8v4M236 23v4M469 8v4M469 23v4M236 33v4M236 48v4M701 33v4M701 48v4"/>
            <text x="9" y="25">0</text><text x="241" y="25">2</text><text x="474" y="25">1</text>
            <text x="9" y="50">0</text><text x="241" y="50">b</text><text x="706" y="50">4</text>
          </svg>
          <svg class="ruler">
            <path d="M9 9H3000" stroke="#444" stroke-width="5" stroke-dasharray="2 3.82"/>
            <path d="M61 3v8M120 3v8M178 3v8M236 3v8M294 3v8M353 3v8M411 3v8M469 3v8M527 3v8M585 3v8M644 3v8M701 3v8M760 3v8M819 3v8M876 3v8M934 3v8M992 3v8M1051 3v8" stroke="#000" stroke-width="2"/>
            <path d="M97 2V35" class="cursor"/>
            <text x="4" y="32">fs</text>
            <g text-anchor="middle"><text x="120" y="32">100 fs</text><text x="236" y="32">200 fs</text><text x="469" y="32">400 fs</text><text x="585" y="32">500 fs</text><text x="701" y="32">600 fs</text><text x="819" y="32">700 fs</text><text x="934" y="32">800 fs</text><text x="1051" y="32">900 fs</text></g>
          </svg>
          <div class="curs"><span>81 fs</span></div>
          <div class="sb big"><button aria-label="Left"><svg class="tri"><use href="#tri-l"/></svg></button><i class="track"><i class="thumb all"><i class="pos"></i></i></i></div>
        </div>
      </div>
      <div class="popup" role="menu">
        <button class="dim">Wave Editor<svg class="tri"><use href="#tri-r"/></svg></button>
        <hr>
        <button>Zoom In<kbd>I</kbd></button>
        <button>Zoom Out<kbd>O</kbd></button>
        <button class="hot">Zoom Full<kbd>F</kbd><span class="mark mark-full"></span></button>
        <button>Zoom Cursor<kbd>C</kbd></button>
        <button>Zoom Last<kbd>L</kbd></button>
        <button class="dim">Zoom Others<kbd>M</kbd></button>
        <button>Zoom Range...<kbd>R</kbd></button>
        <hr>
        <button>Expanded Time<svg class="tri"><use href="#tri-r"/></svg></button>
        <button class="dim">Show Drivers</button>
        <hr>
        <button class="dim">Examine...</button>
        <button class="dim">Add to Wave</button>
        <button class="dim">Cast to</button>
        <button class="dim">Annotate Diff...</button>
        <button class="dim">Ignore Diff</button>
        <hr>
        <button class="dim">Clear Selected</button>
        <button class="dim">Select Related<svg class="tri"><use href="#tri-r"/></svg></button>
        <button class="dim">Select Relating<svg class="tri"><use href="#tri-r"/></svg></button>
        <button class="dim">Select Chain<svg class="tri"><use href="#tri-r"/></svg></button>
        <button class="dim">Select Meta<svg class="tri"><use href="#tri-r"/></svg></button>
        <button class="dim">Transaction Properties...</button>
        <button class="dim">Transaction View...</button>
        <hr>
        <button class="dim">View ATV<svg class="tri"><use href="#tri-r"/></svg></button>
      </div>
    </section>
    <div class="tabs">
      <button class="tab"><svg class="wi"><use href="#flow-ic"/></svg>Dataflow<svg class="x"><use href="#close"/></svg></button>
      <button class="tab on"><svg class="wi"><use href="#wave-ic"/></svg>Wave<svg class="x"><use href="#close"/></svg><span class="mark mark-tab"></span></button>
      <button class="tab"><svg class="wi"><use href="#sub-ic"/></svg>tb_mux4_1.v<svg class="x"><use href="#close"/></svg></button>
    </div>
  </div>
</main>

<div class="split"><i class="rails"></i><i class="dots"></i><i class="rails far"></i></div>
<section class="console">
<pre>ime: 0:03:41

lnprst"

zed design _opt2</pre>
<span class="credit">CSDN @呜呼啦呼_I</span>
</section>
</body>
</html>
```
FILE: styles.css
```css
* { box-sizing: border-box; }
html, body { height: 100%; margin: 0; }
body {
  display: flex;
  flex-direction: column;
  overflow: hidden;
  background: #fff;
  color: #111;
  font: 13px/20px "DejaVu Sans Condensed", "DejaVu Sans", sans-serif;
}
button, input { font: inherit; color: inherit; margin: 0; padding: 0; }
button { background: none; border: 0; text-align: left; }
h2 { margin: 0; font: inherit; white-space: nowrap; }
i { display: block; font-style: normal; }
svg { display: block; flex: none; }
.defs { position: absolute; width: 0; height: 0; }
.dim { color: #808080; }

/* menu bar */
.menubar {
  display: flex;
  flex: none;
  gap: 20px;
  height: 41px;
  padding-top: 12px;
  font: 15px/30px "Open Sans", "Noto Sans", sans-serif;
}
.menubar .cut { margin-left: -6px; }

/* tool bars */
.toolbars { flex: none; background: #f0f0f0; border-top: 1px solid #a8a8a8; height: 122px; }
.row { display: flex; gap: 2px; height: 40px; }
.row.second { padding-left: 199px; }
.bar {
  display: flex;
  flex: none;
  align-items: center;
  justify-content: space-between;
  height: 40px;
  padding: 0 5px 0 17px;
  border-right: 1px solid #777;
  border-bottom: 2px solid #888;
  border-left: 1px solid #fff;
}
.bar::before {
  content: "";
  align-self: stretch;
  flex: none;
  width: 3px;
  margin: 3px 6px 3px -14px;
  border: solid #888;
  border-width: 0 1px 1px 0;
  box-shadow: -1px 0 #fff;
}
.stub-a { width: 15px; padding: 0; overflow: hidden; }
.stub-b { width: 3px; padding: 0; }
.stub-a::before, .stub-b::before { display: none; }
.hook { width: 4px; height: 12px; margin-bottom: 4px; border: solid #333; border-width: 2px 0; }
.w136 { width: 136px; }
.w151 { width: 151px; }
.w158 { width: 158px; }
.w185 { width: 185px; }
.w191 { width: 191px; }
.w211 { width: 211px; }
.w224 { width: 224px; }
.w241 { width: 241px; }
.w243 { width: 243px; }
.w411 { width: 411px; }
.w457 { width: 457px; }
.w563 { width: 563px; }
.rest { flex: 1; justify-content: flex-start; border-right: 0; }
.rest .drop { margin-right: 4px; }
.b { flex: none; width: 27px; height: 26px; padding: 0 2px; }
.b svg { width: 22px; height: 22px; }
.b.up, .b.in { width: 26px; margin: 0 3px; padding: 0 1px; border: solid; border-width: 1px 2px 2px 1px; }
.b.up { border-color: #fff #888 #888 #fff; }
.b.in { border-color: #888 #fff #fff #888; border-width: 2px 1px 1px 2px; background: #fff; }
.sep { flex: none; width: 1px; height: 20px; margin: 0 6px; border-left: 1px dotted #333; }
.drop { flex: none; width: 0; border: solid transparent; border-width: 4px 4px 0; border-top-color: #000; margin: 4px 1px 0; }
.drop.sm { border-width: 3px 2px 0; border-top-color: #444; }
.field { background: #fff; border: solid; border-width: 2px 1px 1px 2px; border-color: #888 #fff #fff #888; height: 24px; }
.help { width: 93px; }
.spin, .combo { display: flex; gap: 3px; align-items: center; margin: 0 6px 0 4px; }
.len { width: 74px; text-align: right; font: 14px/20px "Liberation Mono", monospace; }
.steps { display: flex; flex-direction: column; }
.steps button { display: grid; place-items: center; width: 15px; height: 11px; border: solid #888; border-width: 0 1px 1px 0; }
.t-up { width: 0; border: solid transparent; border-width: 0 4px 6px; border-bottom-color: #000; }
.t-dn { width: 0; border: solid transparent; border-width: 6px 4px 0; border-top-color: #000; }
.t-dn.big { border-width: 7px 7px 0; border-top-color: #555; }
.search { width: 144px; background: #f0f0f0; }
.pick { display: grid; place-items: center; width: 22px; height: 22px; border: solid; border-width: 1px 2px 2px 1px; border-color: #fff #888 #888 #fff; }

/* red call-outs */
.marked, .hot, .tab.on { position: relative; }
.mark { position: absolute; border: 4px solid #fe2415; border-radius: 6px; z-index: 5; pointer-events: none; }
.mark-run { left: -4px; top: -17px; width: 34px; height: 60px; }
.mark-full { left: -32px; right: -51px; top: -12px; height: 49px; }
.mark-tab { left: -6px; right: -18px; top: -20px; height: 61px; }

/* workspace */
.work {
  display: grid;
  grid-template-columns: 112px 301px 1fr;
  gap: 8px;
  flex: 1;
  min-height: 0;
  padding-bottom: 8px;
  background: #cdcdcd;
}
.col { display: flex; flex-direction: column; min-width: 0; min-height: 0; }
.mid { gap: 8px; }
.panel { display: flex; flex-direction: column; background: #f0f0f0; border: solid; border-width: 1px 2px 1px 1px; border-color: #aaa #fff #fff #aaa; min-height: 0; }
.title { display: flex; align-items: center; flex: none; gap: 5px; height: 26px; padding: 0 3px 0 2px; }
.ti { width: 20px; height: 20px; margin-right: -1px; }
.wi { width: 18px; height: 18px; }
.rails { flex: 1; height: 8px; border: solid #777; border-width: 2px 0; margin: 0 -2px 0 2px; }
.rails.end { border-right-width: 1px; margin-right: 0; }
.dots { flex: none; width: 22px; height: 9px; margin: 0; background: radial-gradient(circle at 1px 1px, #333 1px, transparent 1px) 0 0 / 4px 4px; }
.tb { flex: none; display: grid; place-items: center; width: 16px; height: 16px; border: solid #888; border-width: 0 1px 1px 0; box-shadow: -1px -1px #fff; }
.tb svg { width: 11px; height: 11px; }

.side { flex: 1; border-left: 0; }
.side .title { padding-left: 0; }
.side .rails { margin-left: 0; }
.blank-head { height: 22px; border: solid #888; border-width: 1px 1px 2px 0; margin-right: 1px; }
.paper { flex: 1; background: #fff; }
.opts { display: flex; align-items: center; flex: none; height: 35px; padding: 0 7px 0 4px; font-weight: bold; }
.opts input { appearance: none; width: 15px; height: 15px; background: #fff; border: solid; border-width: 2px 1px 1px 2px; border-color: #777 #fff #fff #777; }
.opts input:checked::after { content: ""; display: block; width: 5px; height: 8px; margin: 0 0 0 3px; border: solid #000; border-width: 0 2px 2px 0; transform: rotate(40deg); }
.opts label { margin: 0 15px 0 6px; }
.opts label:last-child { margin: 0 0 0 7px; }
.brace { color: #a22; font-weight: normal; }
.side-tabs { display: flex; justify-content: flex-end; flex: none; height: 29px; margin-top: 2px; background: linear-gradient(#444 2px, #f0f0f0 2px) 0 0 / 85px 100% no-repeat; }
.side-tabs button { display: grid; place-items: center; width: 13px; height: 20px; background: #f0f0f0; border: solid; border-width: 1px; border-color: #fff #888 #888 #fff; }
.side-tabs .tri { color: #666; }

.objects { flex: 1; }
.procs { height: 258px; }
.data { flex: none; border-collapse: collapse; table-layout: fixed; width: auto; margin: 0 1px 0 2px; white-space: nowrap; }
.data th, .data td { padding: 0; font-weight: normal; text-align: left; height: 20px; line-height: 18px; overflow: hidden; }
.data th { height: 22px; padding-left: 2px; background: #f0f0f0; border: solid #888; border-width: 1px 0 2px 1px; }
.data .c-name { width: 183px; padding: 0; }
.c-val { width: 54px; }
.c-kind { width: 48px; }
.data td + td { padding-left: 3px; }
.hd { display: flex; }
.sort { width: 14px; margin-right: 2px; border-right: 1px solid #777; padding: 5px 0 0 2px; }
.sort::before { content: ""; display: block; width: 0; border: solid transparent; border-width: 8px 5px 0; border-top-color: #444; }
.now { display: flex; align-items: center; font: 14px/17px "Liberation Mono", monospace; color: #888; margin-left: -2px; }
.now button { display: flex; align-items: center; height: 19px; padding: 0 2px; background: #e2ecdf; border: 1px solid #aaa; border-left-color: #fff; }
.now .at { gap: 5px; padding: 0 4px 0 6px; }
.now .tri { color: #000; margin-left: 6px; }
.sq { width: 10px; height: 10px; background: #ff8a00; border: 1px solid #333; }
.nm { display: flex; align-items: center; gap: 6px; padding-left: 6px; }
.ex, .no-ex { flex: none; width: 13px; height: 13px; }
.ex { background: linear-gradient(#000, #000) center / 7px 1px no-repeat, linear-gradient(#000, #000) center / 1px 7px no-repeat, #f4f4f4; border: 1px solid #999; border-radius: 2px; }
.gem { width: 18px; height: 18px; }
.objects tbody, .objects .fill { background: #515b8c; color: #f4f4f4; }
.fill { flex: 1; margin: 0 1px 0 2px; }
.procs .fill { background: #8ba3ff; }
.procs tbody { background: #bfccdb; border-top: 4px solid #8ba3ff; }

.sb { display: flex; flex: none; height: 20px; margin: 4px 0 1px 1px; }
.sb button { flex: none; display: grid; place-items: center; width: 20px; background: #f0f0f0; border: solid; border-width: 1px 2px 2px 1px; border-color: #fff #888 #888 #fff; }
.tri { width: 5px; height: 8px; color: #000; }
.track { flex: 1; background: #f6f6f6; }
.thumb { height: 100%; background: #f0f0f0; border: solid; border-width: 1px 2px 2px 1px; border-color: #fff #888 #888 #fff; }
.long { width: 86%; }
.short { width: 39%; }

/* wave window */
.wave { flex: 1; position: relative; border-width: 1px 0 1px 1px; padding: 2px 0 1px 2px; }
.title.active { height: 23px; padding: 0 0 0 2px; background: #9ab3d1; }
.active .rails { flex: 755; height: 9px; margin: 0 -3px 0 3px; border: 0; background: linear-gradient(#b8e0ee 2px, #000 2px 4px, transparent 4px 5px, #b8e0ee 5px 7px, #000 7px); }
.active .rails.far { flex: 497; margin: 0; }
.active h2 { padding-right: 3px; }
.panes { display: grid; grid-template-columns: 199px 129px 1fr; flex: 1; min-height: 0; margin-top: 2px; border: solid #999; border-width: 1px 0 0 1px; background: #fff; font-size: 16px; }
.pane { display: grid; grid-template-rows: 24px 1fr 35px 25px 26px; min-width: 0; min-height: 0; border-right: 2px solid #aaa; padding-left: 1px; }
.plot { border-right: 0; padding-left: 3px; }
.head { display: flex; align-items: center; border-bottom: 2px solid #bbb; padding-left: 12px; }
.head .drop { margin-left: 6px; }
.msgs .head { justify-content: flex-end; padding-right: 7px; font-size: 14px; }
.plot .head { padding-left: 95px; }
.cur { width: 4px; height: 22px; background: #ffd800; }
.sigs { list-style: none; margin: 0; padding: 6px 0 0 4px; white-space: nowrap; }
.sigs li { display: flex; align-items: center; height: 25px; }
.names .sigs { padding-left: 16px; }
.names .sigs .gem { margin: 0 6px; }
.sigs .endline { height: 10px; margin: -6px 4px 0 0; }
.names .endline { margin-left: -5px; }
.endline i { flex: 1; height: 1px; background: #000; }
.nowrow, .currow { display: flex; align-items: center; border-top: 1px solid #aaa; }
.names svg + span { flex: 1; text-align: right; padding-right: 11px; }
.nowrow { padding-left: 10px; }
.currow { padding-left: 13px; border-bottom: 2px solid #bbb; background: linear-gradient(#bdbdbd, #bdbdbd) 61px 0 no-repeat; }
.currow svg { margin-right: 1px; }
.msgs .nowrow, .msgs .currow { justify-content: flex-end; padding-right: 10px; }
.msgs .currow { background: #bdbdbd; }
.sb.big { margin: 5px 0 1px 0; background: #f0f0f0; }
.names .big { margin-left: 9px; }
.big .tri { width: 6px; height: 9px; }
.off .tri { color: #aaa; }
.names-thumb { width: 89%; }
.thumb.all { width: 100%; border-right: 0; padding-left: 88px; }
.plot .big { margin-left: 1px; gap: 2px; }
.pos { width: 1px; height: 15px; margin-top: 1px; background: #ffd800; }
.traces, .ruler { width: 100%; height: 100%; overflow: hidden; font-size: 16px; }
.ruler { border-top: 1px solid #aaa; }
.gl { stroke: #b4b4b4; stroke-width: 1; shape-rendering: crispEdges; }
.cursor { stroke: #ffd800; stroke-width: 4; }
.tr { fill: none; stroke: #111; stroke-width: 1; shape-rendering: crispEdges; }
.nodes { stroke: #111; stroke-width: 3; shape-rendering: crispEdges; }
.curs { border-top: 1px solid #aaa; border-bottom: 2px solid #bbb; padding-left: 76px; }
.curs span { display: block; width: 42px; height: 23px; border: 1px solid #ffd800; color: #ffd800; text-align: center; line-height: 24px; font-size: 16px; }

/* context menu */
.popup { position: absolute; left: 601px; top: 161px; width: 225px; padding: 3px; background: #f0f0f0; border: 1px solid #999; box-shadow: 3px 3px 3px #777; z-index: 4; }
.popup button { display: flex; align-items: center; width: 100%; height: 25px; padding-left: 25px; }
.popup hr { height: 2px; margin: 4px 1px 5px 0; border: solid; border-width: 1px 0; border-color: #999 #fff #fff; }
.popup kbd { font: inherit; margin-left: auto; width: 33px; }
.popup .tri { margin-left: auto; margin-right: 9px; color: inherit; }
.popup .hot { background: #9ab3d1; }

/* document tabs */
.tabs { display: flex; flex: none; height: 29px; margin-top: 2px; background: #f0f0f0; border-top: 2px solid #333; }
.tab { display: flex; align-items: center; gap: 5px; height: 26px; padding: 0 5px 2px 7px; background: #cdcdcd; border: solid #222; border-width: 0 1px 2px 1px; border-radius: 0 0 5px 5px; font-size: 14px; }
.tab .x { width: 9px; height: 9px; margin-left: 3px; opacity: .25; }
.tab.on { background: #f0f0f0; }

/* console */
.split { display: flex; align-items: center; flex: none; height: 27px; background: #f0f0f0; border-top: 1px solid #999; border-bottom: 2px solid #444; }
.split .rails { flex: 869; margin: 0; border-width: 2px 0; border-color: #999; height: 9px; }
.split .rails.far { flex: 937; }
.split .dots { margin: 0 3px; }
.console { display: flex; align-items: flex-start; justify-content: space-between; flex: none; height: 83px; overflow: hidden; }
.console pre { margin: -4px 0 0; font: 14px/19px "Liberation Mono", monospace; color: #2222e8; }
.credit { align-self: flex-end; margin: 0 15px 7px; font: 19px/24px "Noto Sans CJK SC", "Open Sans", sans-serif; color: #8c8c8c; }
```
